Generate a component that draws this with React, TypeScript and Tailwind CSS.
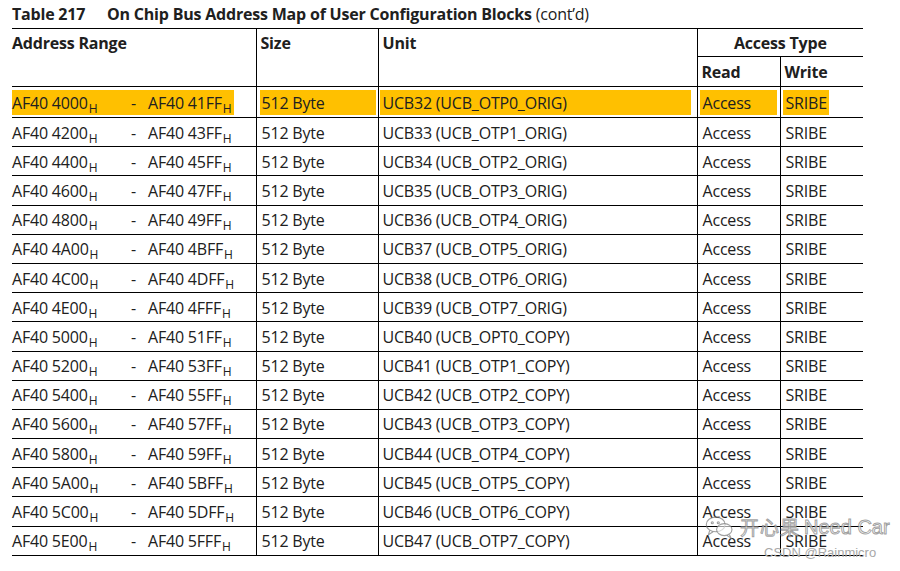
const rows = [
  ["4000", "41FF", "UCB32 (UCB_OTP0_ORIG)"],
  ["4200", "43FF", "UCB33 (UCB_OTP1_ORIG)"],
  ["4400", "45FF", "UCB34 (UCB_OTP2_ORIG)"],
  ["4600", "47FF", "UCB35 (UCB_OTP3_ORIG)"],
  ["4800", "49FF", "UCB36 (UCB_OTP4_ORIG)"],
  ["4A00", "4BFF", "UCB37 (UCB_OTP5_ORIG)"],
  ["4C00", "4DFF", "UCB38 (UCB_OTP6_ORIG)"],
  ["4E00", "4FFF", "UCB39 (UCB_OTP7_ORIG)"],
  ["5000", "51FF", "UCB40 (UCB_OPT0_COPY)"],
  ["5200", "53FF", "UCB41 (UCB_OTP1_COPY)"],
  ["5400", "55FF", "UCB42 (UCB_OTP2_COPY)"],
  ["5600", "57FF", "UCB43 (UCB_OTP3_COPY)"],
  ["5800", "59FF", "UCB44 (UCB_OTP4_COPY)"],
  ["5A00", "5BFF", "UCB45 (UCB_OTP5_COPY)"],
  ["5C00", "5DFF", "UCB46 (UCB_OTP6_COPY)"],
  ["5E00", "5FFF", "UCB47 (UCB_OTP7_COPY)"],
];

function Hex({ value }: { value: string }) {
  return (
    <>
      AF40 {value}
      <span className="text-[12px] relative top-[4px] ml-[1px]">H</span>
    </>
  );
}

function Mark({ on, className, children }: { on: boolean; className?: string; children: React.ReactNode }) {
  return (
    <span className={`inline-block h-[25px] leading-[27px] ${on ? "bg-[#ffc000]" : ""} ${className ?? ""}`}>
      {children}
    </span>
  );
}

export default function App() {
  return (
    <div className="relative w-[900px] h-[571px] bg-white text-[#202020] font-['Open_Sans',sans-serif] overflow-hidden">
      {/* Caption */}
      <div className="pl-[12px] pt-[2px] h-[28px] text-[16px] leading-[24px] tracking-[-0.2px]">
        <span className="font-bold inline-block w-[95px]">Table 217</span>
        <span className="font-bold">On Chip Bus Address Map of User Configuration Blocks</span>{" "}
        <span>(cont’d)</span>
      </div>

      <table className="ml-[12px] w-[851px] border-collapse table-fixed text-[16px] tracking-[-0.2px]">
        <colgroup>
          <col className="w-[244px]" />
          <col className="w-[122px]" />
          <col className="w-[319px]" />
          <col className="w-[83px]" />
          <col className="w-[83px]" />
        </colgroup>
        <thead>
          <tr className="h-[28px]">
            <th rowSpan={2} className="border-t border-b border-black text-left align-top font-bold pt-[1px] leading-[26px]">
              Address Range
            </th>
            <th rowSpan={2} className="border border-black text-left align-top font-bold pl-[4px] pt-[1px] leading-[26px]">
              Size
            </th>
            <th rowSpan={2} className="border border-black text-left align-top font-bold pl-[4px] pt-[1px] leading-[26px]">
              Unit
            </th>
            <th colSpan={2} className="border-t border-b border-l border-black text-center font-bold leading-[26px]">
              Access Type
            </th>
          </tr>
          <tr className="h-[30px]">
            <th className="border-b border-l border-black text-left font-bold pl-[4px] leading-[28px]">Read</th>
            <th className="border-b border-l border-black text-left font-bold pl-[4px] leading-[28px]">Write</th>
          </tr>
        </thead>
        <tbody>
          {rows.map(([start, end, unit], i) => {
            const on = i === 0;
            return (
              <tr key={start} className={i === 0 ? "h-[31px]" : "h-[29.2px]"}>
                <td className="border-b border-black p-0 align-middle whitespace-nowrap">
                  <div className="flex items-center">
                    <Mark on={on} className="w-[118px]">
                      <Hex value={start} />
                    </Mark>
                    <Mark on={on} className="w-[104px]">
                      <span className="inline-block pl-[1px] w-[18px]">-</span>
                      <Hex value={end} />
                    </Mark>
                  </div>
                </td>
                <td className="border-b border-l border-black p-0 pl-[3px] align-middle whitespace-nowrap">
                  <Mark on={on} className="w-[116px] pl-[2px]">512 Byte</Mark>
                </td>
                <td className="border-b border-l border-black p-0 pl-[1px] align-middle whitespace-nowrap">
                  <Mark on={on} className="w-[311px] pl-[3px]">{unit}</Mark>
                </td>
                <td className="border-b border-l border-black p-0 pl-[2px] align-middle whitespace-nowrap">
                  <Mark on={on} className="w-[77px] pl-[3px]">Access</Mark>
                </td>
                <td className="border-b border-l border-black p-0 pl-[2px] align-middle whitespace-nowrap">
                  <Mark on={on} className="pl-[3px] pr-[2px]">SRIBE</Mark>
                </td>
              </tr>
            );
          })}
        </tbody>
      </table>

      {/* Watermark */}
      <div className="absolute left-[704px] top-[514px] flex items-center gap-[4px] whitespace-nowrap text-white/70 font-['Noto_Sans_CJK_SC','Noto_Sans',sans-serif] text-[19px] leading-[26px] [-webkit-text-stroke:1px_rgba(120,120,120,0.7)]">
        <svg width="32" height="24" viewBox="0 0 36 28" fill="none" stroke="rgba(120,120,120,0.7)" strokeWidth="1.3">
          <ellipse cx="13" cy="11" rx="11" ry="8.5" />
          <path d="M6 18 L4.5 23 L10 19.5" />
          <ellipse cx="23" cy="17" rx="9" ry="7" fill="rgba(255,255,255,0.6)" />
          <path d="M29 23 L31 27 L26 23.8" />
          <circle cx="9" cy="9" r="1.2" />
          <circle cx="16" cy="9" r="1.2" />
        </svg>
        <span className="tracking-[1px]">开心果</span>
        <span className="font-['Liberation_Sans',sans-serif] font-light text-[20px]">Need Car</span>
      </div>
      <div className="absolute left-[764px] top-[545px] whitespace-nowrap text-[13px] leading-[16px] text-[#a8a8a8] font-['Liberation_Sans',sans-serif]">
        CSDN @Rainmicro
      </div>
    </div>
  );
}
